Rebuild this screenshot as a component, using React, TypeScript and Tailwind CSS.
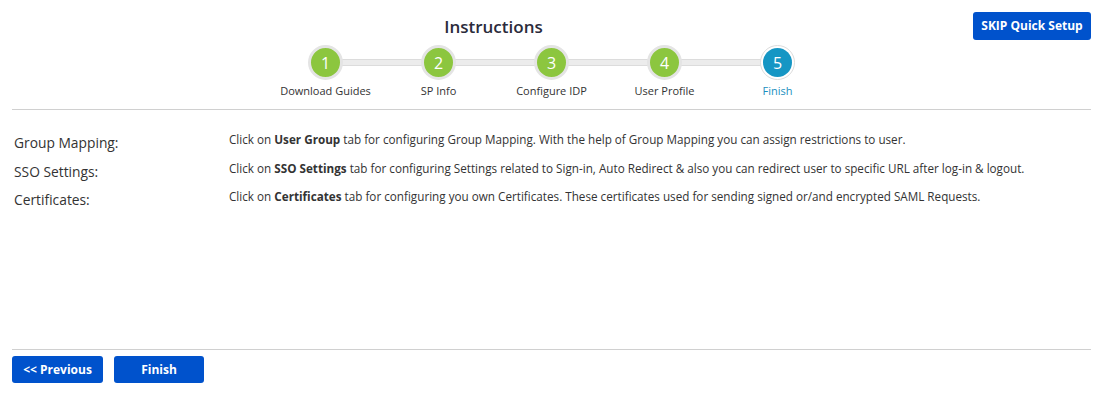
import React from "react";

const steps = [
  { n: 1, label: "Download Guides", done: true },
  { n: 2, label: "SP Info", done: true },
  { n: 3, label: "Configure IDP", done: true },
  { n: 4, label: "User Profile", done: true },
  { n: 5, label: "Finish", done: false },
];

const rows = [
  {
    label: "Group Mapping:",
    bold: "User Group",
    rest: " tab for configuring Group Mapping. With the help of Group Mapping you can assign restrictions to user.",
  },
  {
    label: "SSO Settings:",
    bold: "SSO Settings",
    rest: " tab for configuring Settings related to Sign-in, Auto Redirect & also you can redirect user to specific URL after log-in & logout.",
  },
  {
    label: "Certificates:",
    bold: "Certificates",
    rest: " tab for configuring you own Certificates. These certificates used for sending signed or/and encrypted SAML Requests.",
  },
];

export default function App() {
  return (
    <div className="w-[1097px] h-[393px] bg-white pl-3 pr-[6px] pt-3 text-[#333] font-['Open_Sans','Noto_Sans',sans-serif]">
      {/* header */}
      <div className="relative h-[98px] border-b border-[#d0d0d0]">
        <button className="absolute right-0 top-0 h-[28px] w-[118px] rounded-[3px] bg-[#0052cc] text-[12px] font-bold text-white">
          SKIP Quick Setup
        </button>
        <div className="pt-[2px] pr-[116px] text-center text-[17px] font-semibold leading-[26px] text-[#2b2b3b]">Instructions</div>
        <div className="relative mx-auto mt-[5px] w-[565px]">
          <div className="absolute left-[57px] right-[57px] top-[14px] h-[7px] border border-[#dcdcdc] bg-[#ececec]" />
          <div className="relative grid grid-cols-5">
            {steps.map((s) => (
              <div key={s.n} className="flex flex-col items-center">
                <div
                  className={
                    s.done
                      ? "flex h-[35px] w-[35px] items-center justify-center rounded-full border-[3px] border-[#e4e4e4] bg-[#8cc63f]"
                      : "flex h-[35px] w-[35px] items-center justify-center rounded-full border border-[#dcdcdc] bg-white"
                  }
                >
                  {s.done ? (
                    <span className="text-[16px] text-white">{s.n}</span>
                  ) : (
                    <span className="flex h-[29px] w-[29px] items-center justify-center rounded-full bg-[#1596c4] text-[16px] text-white">
                      {s.n}
                    </span>
                  )}
                </div>
                <div className={`mt-[3px] text-[11px] leading-[16px] ${s.done ? "text-[#333]" : "text-[#1a8fc0]"}`}>{s.label}</div>
              </div>
            ))}
          </div>
        </div>
      </div>

      {/* body */}
      <div className="h-[240px] border-b border-[#d0d0d0] pt-[20px]">
        {rows.map((r) => (
          <div key={r.label} className="flex h-[28.5px]">
            <div className="w-[217px] pl-[2px] pt-[4px] text-[13.8px] leading-[18px]">{r.label}</div>
            <div className="text-[11.7px] leading-[18px]">
              Click on <b className="font-bold">{r.bold}</b>
              {r.rest}
            </div>
          </div>
        ))}
      </div>

      {/* footer */}
      <div className="flex gap-[11px] pt-[6px]">
        <button className="h-[27px] w-[91px] rounded-[3px] bg-[#0052cc] text-[12px] font-bold text-white">&lt;&lt; Previous</button>
        <button className="h-[27px] w-[90px] rounded-[3px] bg-[#0052cc] text-[12px] font-bold text-white">Finish</button>
      </div>
    </div>
  );
}
